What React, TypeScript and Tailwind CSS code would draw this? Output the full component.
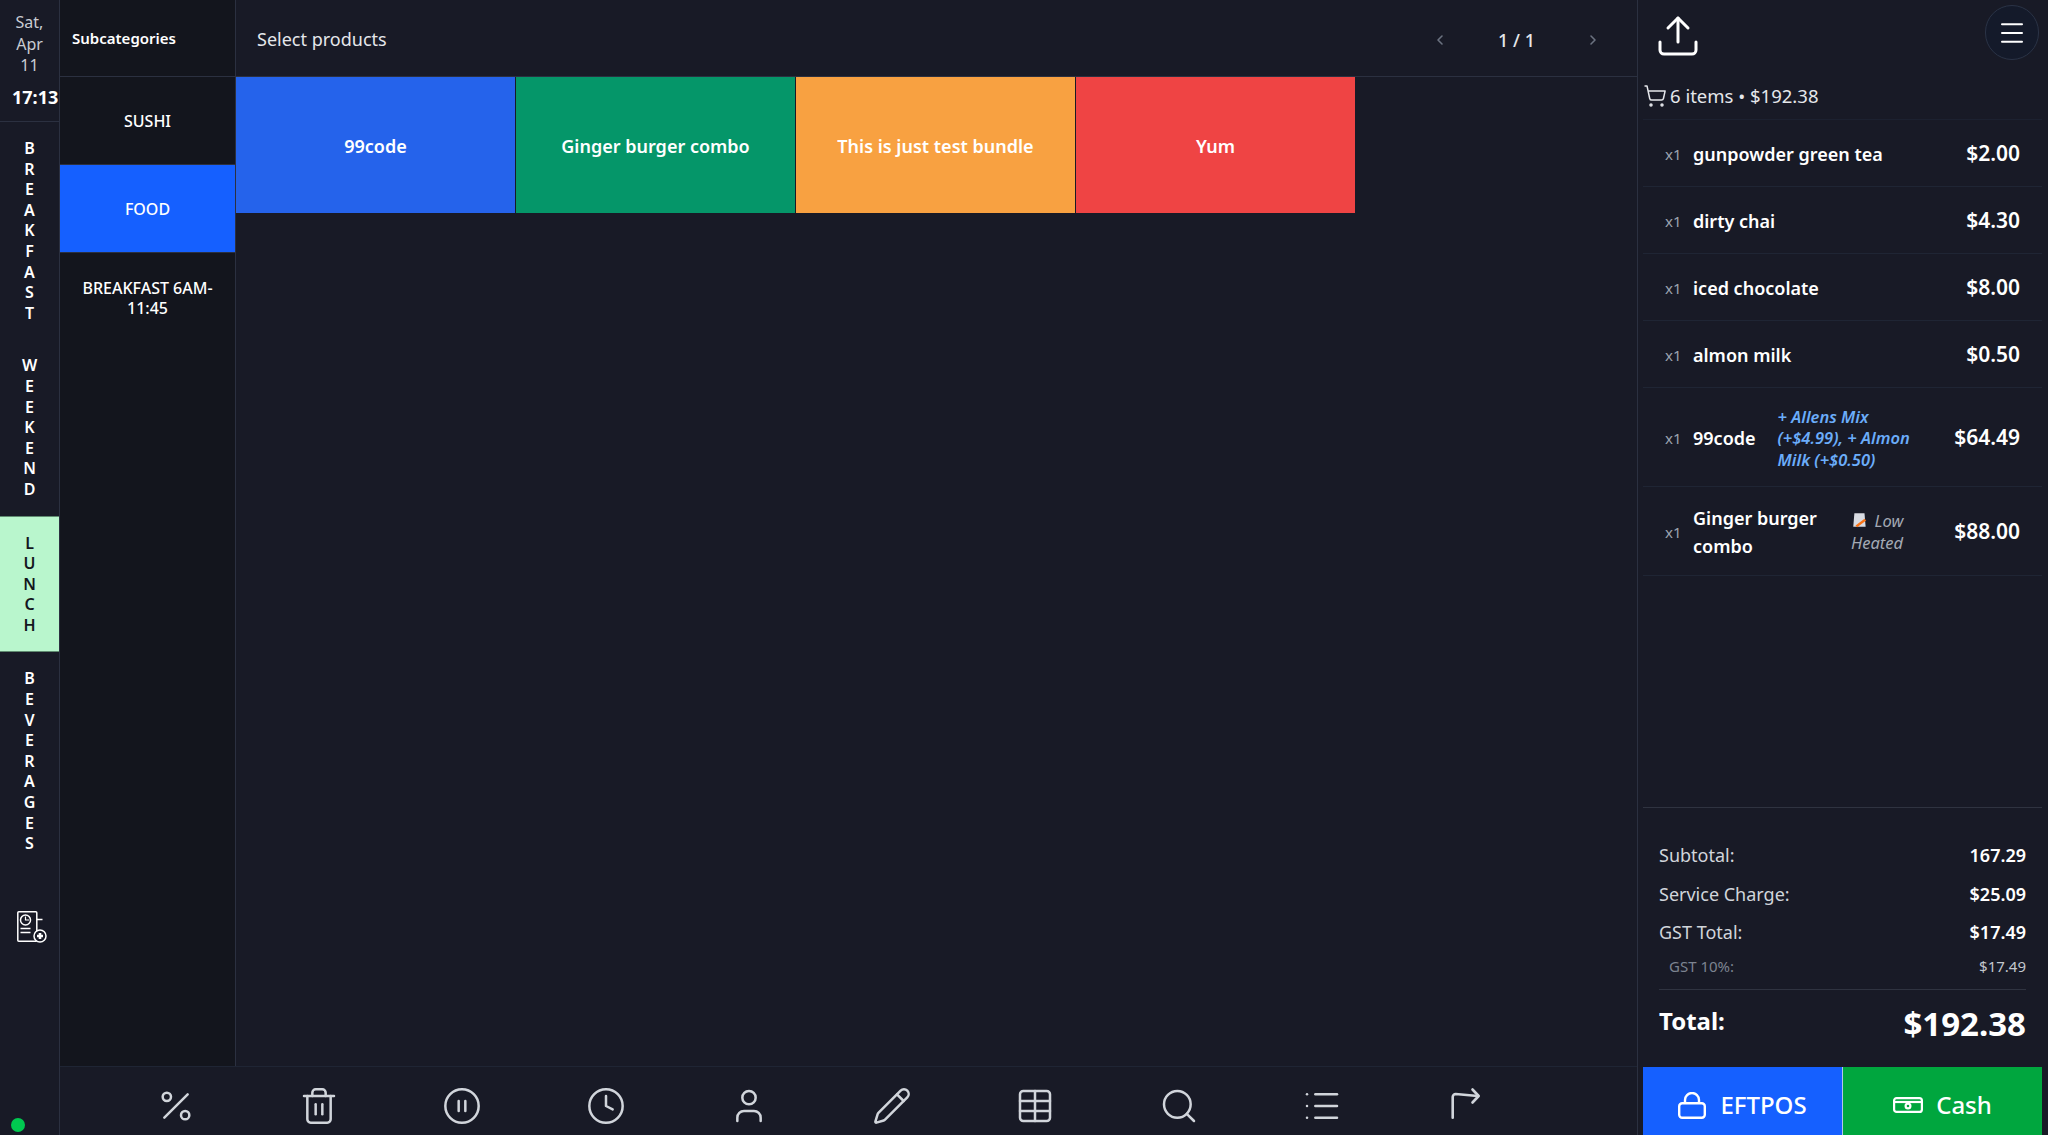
import {
  ChevronLeft,
  ChevronRight,
  Clock,
  CirclePause,
  List,
  Menu,
  Pencil,
  Percent,
  Search,
  ShoppingCart,
  Table,
  Trash2,
  Upload,
  User,
} from "lucide-react"

const font = { fontFamily: '"Noto Sans", "Open Sans", sans-serif' }

const categories = [
  { name: "BREAKFAST", active: false },
  { name: "WEEKEND", active: false },
  { name: "LUNCH", active: true },
  { name: "BEVERAGES", active: false },
]

const products = [
  { name: "99code", color: "bg-[#2563eb]" },
  { name: "Ginger burger combo", color: "bg-[#059669]" },
  { name: "This is just test bundle", color: "bg-[#f8a141]" },
  { name: "Yum", color: "bg-[#ef4444]" },
]

function TurnIcon({ className }: { className?: string }) {
  return (
    <svg
      viewBox="0 0 40 40"
      fill="none"
      stroke="currentColor"
      strokeWidth="2.6"
      strokeLinecap="round"
      strokeLinejoin="round"
      className={className}
    >
      <path d="M7.7 31.7V11a3 3 0 0 1 3-3l22 2" />
      <polyline points="27.5 3.5 33.7 10 27.5 16.5" />
    </svg>
  )
}

const toolbar = [Percent, Trash2, CirclePause, Clock, User, Pencil, Table, Search, List, TurnIcon]

function ReportIcon() {
  return (
    <svg width="30" height="32" viewBox="0 0 30 32" fill="none" stroke="white" strokeWidth="1.5">
      <rect x="0.8" y="0.8" width="19" height="29.5" rx="1" />
      <path d="M19.5 8.5h6" />
      <circle cx="8.5" cy="9" r="5" />
      <path d="M8.5 5.5V9h3.5" strokeWidth="1.2" />
      <path d="M3.5 17.5h10M3.5 21.5h10" strokeWidth="1.6" />
      <circle cx="23" cy="25" r="6" fill="#181a26" />
      <path d="M20 25h6M23 22v6" strokeWidth="2.6" />
    </svg>
  )
}

function LockIcon() {
  return (
    <svg width="28" height="27" viewBox="0 0 28 27" fill="none" stroke="white" strokeWidth="2.4">
      <rect x="1.2" y="11.2" width="25.6" height="14.6" rx="3" />
      <path d="M7 11V8a7 7 0 0 1 14 0v3" />
    </svg>
  )
}

function CashIcon() {
  return (
    <svg width="30" height="16" viewBox="0 0 30 16" fill="none" stroke="white" strokeWidth="2.2">
      <rect x="1.1" y="1.1" width="27.8" height="13.8" rx="2.5" />
      <path d="M1.1 5h27.8" />
      <circle cx="15" cy="9" r="2.4" />
    </svg>
  )
}

function OrderRow({
  name,
  price,
  note,
  className = "h-[67px]",
}: {
  name: React.ReactNode
  price: string
  note?: React.ReactNode
  className?: string
}) {
  return (
    <div className={`flex items-center border-b border-[#1f2534] px-[22px] pt-[2px] ${className}`}>
      <span className="w-[28px] shrink-0 text-[15px] text-[#9ca3af]">x1</span>
      {name}
      {note}
      <span className="ml-auto shrink-0 text-[21px] font-semibold text-white">{price}</span>
    </div>
  )
}

function TotalRow({ label, value, small }: { label: string; value: string; small?: boolean }) {
  if (small) {
    return (
      <div className="flex h-[28px] items-center justify-between pl-[10px] text-[15px] text-[#7c8390]">
        <span>{label}</span>
        <span className="text-[#c3c7ce]">{value}</span>
      </div>
    )
  }
  return (
    <div className="flex h-[38.5px] items-center justify-between text-[18px] text-[#d1d5db]">
      <span>{label}</span>
      <span className="font-semibold text-white">{value}</span>
    </div>
  )
}

export default function App() {
  return (
    <div style={font} className="flex h-screen w-screen overflow-hidden bg-[#181a26] text-white">
      {/* Category rail */}
      <aside className="flex w-[60px] shrink-0 flex-col border-r border-[#2b3040]">
        <div className="h-[122px] shrink-0 border-b border-[#2b3040] pt-[12px] text-center">
          <div className="text-[16px] leading-[21.5px] text-[#c9ccd3]">
            Sat,
            <br />
            Apr
            <br />
            11
          </div>
          <div className="mt-[8px] whitespace-nowrap pl-[12px] text-left text-[18px] font-bold leading-[24px]">17:13</div>
        </div>
        {categories.map((c) => (
          <div
            key={c.name}
            className={`flex flex-col items-center py-[16px] text-[16px] font-semibold leading-[20.6px] ${
              c.active ? "border-y border-[#5f8a70] bg-[#b9f6cd] text-[#14161e]" : ""
            }`}
          >
            {c.name.split("").map((l, i) => (
              <span key={i}>{l}</span>
            ))}
          </div>
        ))}
        <div className="mt-[41px] pl-[17px]">
          <ReportIcon />
        </div>
        <div className="ml-[11px] mt-auto mb-[3px] size-[14px] rounded-full bg-[#00c950]" />
      </aside>

      <div className="flex min-w-0 flex-1 flex-col">
        <div className="flex min-h-0 flex-1">
          {/* Subcategories */}
          <div className="flex w-[176px] shrink-0 flex-col border-r border-[#2b3040] bg-[#13151d]">
            <div className="flex h-[77px] shrink-0 items-center border-b border-[#2b3040] pl-[12px] text-[15px] font-semibold">
              Subcategories
            </div>
            <div className="flex h-[88px] items-center justify-center border-b border-[#2b3040] text-[16px] font-medium">
              SUSHI
            </div>
            <div className="flex h-[88px] items-center justify-center border-b border-[#2b3040] bg-[#1560ff] text-[16px] font-medium">
              FOOD
            </div>
            <div className="flex h-[88px] items-center justify-center px-2 pt-[2px] text-center text-[16px] font-medium leading-[20.5px]">
              BREAKFAST 6AM-11:45
            </div>
          </div>

          {/* Products */}
          <div className="flex min-w-0 flex-1 flex-col">
            <div className="flex h-[77px] shrink-0 items-center border-b border-[#2b3040] pl-[21px] pt-[2px] text-[18px] text-[#e5e7eb]">
              <span>Select products</span>
              <div className="ml-auto flex items-center pr-[36px] pt-[2px]">
                <ChevronLeft size={16} strokeWidth={2.4} className="text-[#6b7280]" />
                <span className="w-[137px] text-center text-[18px] font-medium">1 / 1</span>
                <ChevronRight size={16} strokeWidth={2.4} className="text-[#6b7280]" />
              </div>
            </div>
            <div className="grid grid-cols-5 gap-px pr-[2px]">
              {products.map((p) => (
                <div
                  key={p.name}
                  className={`flex h-[136px] items-center justify-center pt-[2px] text-[18px] font-semibold ${p.color}`}
                >
                  {p.name}
                </div>
              ))}
            </div>
          </div>
        </div>

        {/* Toolbar */}
        <div className="flex h-[69px] shrink-0 items-center border-t border-[#1f2534] pl-[44px] pr-[100px] pt-[9px]">
          {toolbar.map((Icon, i) => (
            <div key={i} className="flex flex-1 items-center justify-center">
              <Icon className="size-[40px] text-[#d1d5db]" strokeWidth={1.5} />
            </div>
          ))}
        </div>
      </div>

      {/* Order panel */}
      <div className="flex w-[411px] shrink-0 flex-col border-l border-[#2b3040] pl-[5px] pr-[6px]">
        <div className="flex h-[60px] shrink-0 items-start justify-between">
          <Upload size={48} strokeWidth={1.5} className="ml-[11px] mt-[12px]" />
          <div className="mr-[3px] mt-[5px] flex h-[55px] w-[54px] items-center justify-center rounded-full border border-[#2a3346] bg-[#141a2a]">
            <Menu size={30} strokeWidth={1.6} />
          </div>
        </div>
        <div className="flex h-[60px] shrink-0 items-center border-b border-[#1c2130] pb-[3px] pt-[16px] text-[18.5px] text-[#e5e7eb]">
          <ShoppingCart size={24} strokeWidth={1.5} className="mr-[3px]" />
          6 items • $192.38
        </div>

        <OrderRow name={<span className="text-[18px] font-semibold">gunpowder green tea</span>} price="$2.00" />
        <OrderRow name={<span className="text-[18px] font-semibold">dirty chai</span>} price="$4.30" />
        <OrderRow name={<span className="text-[18px] font-semibold">iced chocolate</span>} price="$8.00" />
        <OrderRow name={<span className="text-[18px] font-semibold">almon milk</span>} price="$0.50" />
        <OrderRow
          className="h-[99px]"
          name={<span className="text-[18px] font-semibold">99code</span>}
          note={
            <span className="ml-[22px] w-[146px] text-[16.5px] font-semibold italic leading-[21.5px] text-[#6badfa]">
              + Allens Mix (+$4.99), + Almon Milk (+$0.50)
            </span>
          }
          price="$64.49"
        />
        <OrderRow
          className="h-[89px]"
          name={<span className="w-[130px] shrink-0 text-[18px] font-semibold leading-[28px]">Ginger burger combo</span>}
          note={
            <span className="ml-[18px] w-[72px] text-center text-[16.5px] italic leading-[22px] text-[#a3a9b4]">
              <svg width="18" height="18" viewBox="0 0 16 16" className="mr-[6px] inline-block align-[-3px]">
                <path d="M3 1h9l1 12H2z" fill="#d8dbe2" />
                <path d="M4 12l8-6 1.5 1.5-8 6z" fill="#f97316" />
              </svg>
              Low Heated
            </span>
          }
          price="$88.00"
        />

        <div className="mt-auto border-t border-[#2f3340] px-[16px] pt-[29px]">
          <TotalRow label="Subtotal:" value="167.29" />
          <TotalRow label="Service Charge:" value="$25.09" />
          <TotalRow label="GST Total:" value="$17.49" />
          <TotalRow label="GST 10%:" value="$17.49" small />
          <div className="mt-[9px] flex h-[78px] items-start justify-between border-t border-[#2f3340] pt-[11px]">
            <span className="text-[24px] font-bold leading-[40px]">Total:</span>
            <span className="text-[33px] font-bold leading-[46px]">$192.38</span>
          </div>
        </div>
        <div className="flex h-[68px] shrink-0 text-[24px] font-medium">
          <div className="flex flex-1 items-center justify-center gap-[14px] border-r border-[#b4c6ea] bg-[#1560ff] pt-[8px]">
            <LockIcon />
            EFTPOS
          </div>
          <div className="flex flex-1 items-center justify-center gap-[13px] bg-[#00a63e] pt-[8px]">
            <CashIcon />
            Cash
          </div>
        </div>
      </div>
    </div>
  )
}
